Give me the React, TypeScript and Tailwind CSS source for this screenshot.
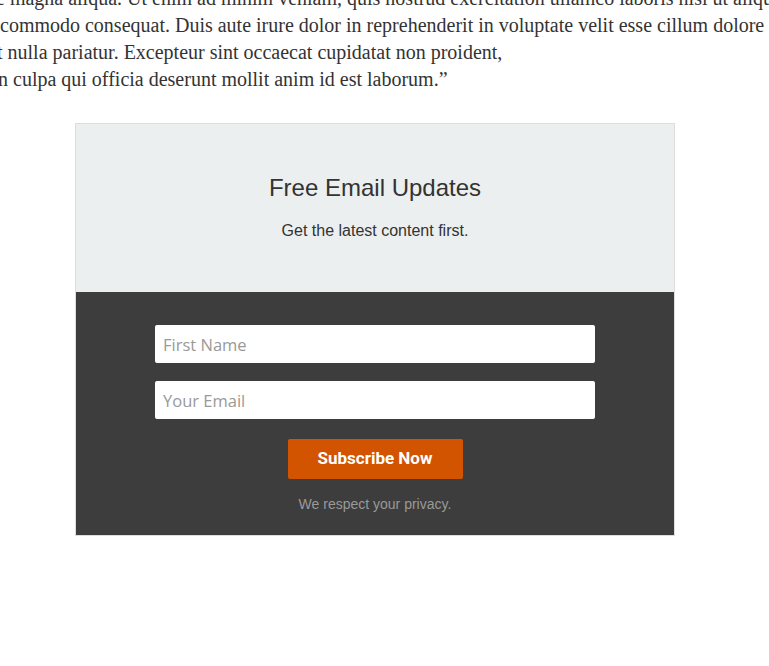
export default function App() {
  return (
    <div className="h-[666px] w-[769px] overflow-hidden bg-white">
      {/* article text, cut at the window edges */}
      <div className="mt-[-15px] font-['Liberation_Serif',serif] text-[20px] leading-[27px] text-[#333] whitespace-nowrap">
        <div className="ml-[-4px]">e magna aliqua. Ut enim ad minim veniam, quis nostrud exercitation ullamco laboris nisi ut aliquip ex ea</div>
        <div className="ml-[0px]">commodo consequat. Duis aute irure dolor in reprehenderit in voluptate velit esse cillum dolore eu fugiat</div>
        <div className="ml-[-3px]">t nulla pariatur. Excepteur sint occaecat cupidatat non proident,</div>
        <div className="ml-[-2px]">n culpa qui officia deserunt mollit anim id est laborum.”</div>
      </div>

      {/* signup box */}
      <div className="ml-[75px] mt-[30px] w-[600px] border border-[#dddddd]">
        <div className="flex h-[168px] flex-col items-center bg-[#ecefef] pt-[50px] font-['Liberation_Sans',Arial,sans-serif] text-[#333]">
          <h3 className="text-[24px] leading-[28px]">Free Email Updates</h3>
          <p className="mt-[19px] text-[16px] leading-[20px]">Get the latest content first.</p>
        </div>
        <div className="flex flex-col items-center bg-[#3d3d3d] pt-[33px] pb-[22px]">
          <input
            type="text"
            placeholder="First Name"
            className="h-[38px] w-[440px] rounded-[2px] bg-white px-[8px] font-['Open_Sans',sans-serif] text-[16.5px] text-[#333] placeholder:text-[#999] outline-none"
          />
          <input
            type="email"
            placeholder="Your Email"
            className="mt-[18px] h-[38px] w-[440px] rounded-[2px] bg-white px-[8px] font-['Open_Sans',sans-serif] text-[16.5px] text-[#333] placeholder:text-[#999] outline-none"
          />
          <button className="mt-[20px] h-[40px] w-[175px] rounded-[2px] bg-[#d35400] font-['Roboto',sans-serif] text-[17px] font-bold text-white">
            Subscribe Now
          </button>
          <p className="mt-[16px] font-['Liberation_Sans',Arial,sans-serif] text-[14px] leading-[18px] text-[#999]">
            We respect your privacy.
          </p>
        </div>
      </div>
    </div>
  );
}
